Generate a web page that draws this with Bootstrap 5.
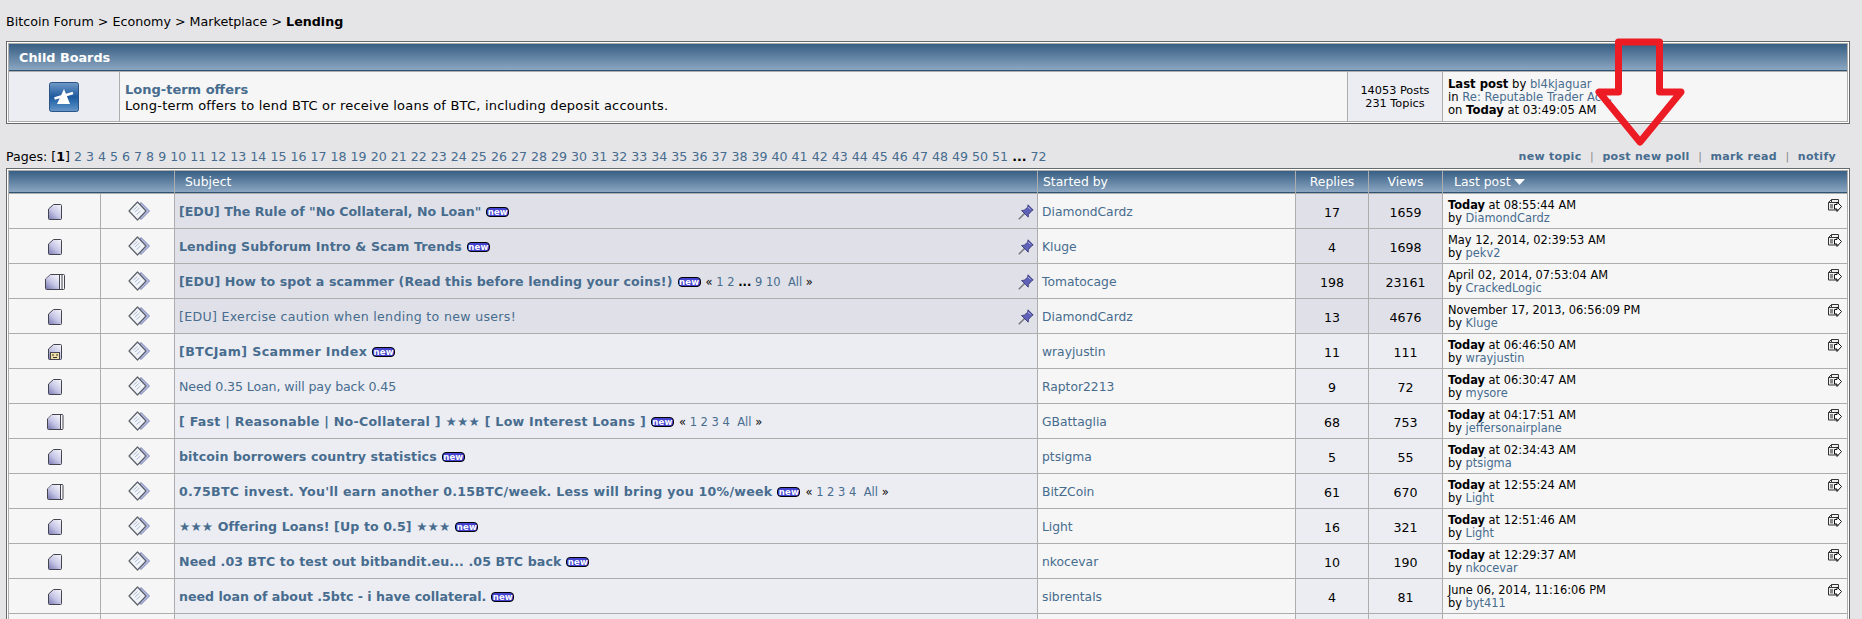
<!DOCTYPE html>
<html lang="en">
<head>
<meta charset="utf-8">
<title>Lending</title>
<link href="https://cdn.jsdelivr.net/npm/bootstrap@5.3.0/dist/css/bootstrap.min.css" rel="stylesheet">
<style>
html,body{height:619px;overflow:hidden}
body{background:#e5e5e8;color:#000;font-family:"DejaVu Sans",Verdana,sans-serif;font-size:11.4px;line-height:13px;position:relative}
a{color:#476c8e;text-decoration:none}
.forum-page{padding:0 12px 0 6px}
.crumbs{height:41px;padding-top:15px;font-size:12.7px;line-height:14px;color:#000}
.crumbs a{color:#000}
.frame{border:1px solid #696969;padding:1px;background:#fff}
.grid-table{width:100%;table-layout:fixed;border-collapse:separate;border-spacing:1px;background:#adadad}
.grid-table td,.grid-table th{padding:0;vertical-align:middle}
.bar{background:linear-gradient(#375e83,#8ba6c1);border-bottom:1px solid #2f5473;color:#fff;font-weight:400}
.bar-main th{height:22px;font-size:12.4px;line-height:14px}
.bar-main .head-subject{padding-left:10px}
.bar-main .head-author{padding-left:5px}
.bar-main .head-last{padding-left:11px}
.bar-child th{height:27px;font-size:12.8px;font-weight:700;padding-left:10px;padding-top:1px}
.c-w1{width:110px}.c-w3{width:94px}.c-w4{width:404px}
.m-w1{width:91px}.m-w2{width:73px}.m-w4{width:257px}.m-w5{width:72px}.m-w6{width:73px}.m-w7{width:404px}
.bg-a{background:#f6f6f6}.bg-b{background:#ecedf3}.bg-c{background:#e0e1e8}
.child-row td{height:49px}
.grid-table .board-cell{padding:0 0 0 5px}
.board-name{display:block;font-weight:700;font-size:13px;line-height:17px}
.board-text{font-size:13px;line-height:15px;letter-spacing:.2px}
.stat{font-size:11.3px;line-height:13px}
.grid-table .last-board{padding:1px 0 0 5px;font-size:11.6px}
.pager-row{height:44px;padding-top:26px;font-size:12.6px;line-height:14px}
.tools{padding-right:14px;color:#888;font-size:11px}
.tools a{font-weight:700;letter-spacing:.3px}
.sep{margin:0 8.6px}
.topic-row td{height:34px}
.subject-inner{padding:1px 3px 0 4px}
.topic-title{font-size:12.6px;font-weight:700}
.topic-title.plain{font-weight:400}
.fit-0{letter-spacing:-.12px}
.fit-1{letter-spacing:.1px}
.fit-2{letter-spacing:.26px}
.fit-3{letter-spacing:.4px}
.fit-4{letter-spacing:.3px}
.new-tag{display:inline-block;background:#4343cf;border:1px solid #000;border-radius:4px;color:#fff;font-size:8.5px;line-height:8px;height:10px;width:23px;text-align:center;font-weight:700;margin-left:5px;vertical-align:1px;letter-spacing:.2px}
.small-pages{font-size:11.5px;margin-left:5px}
.grid-table .author{padding:2px 0 0 4px;font-size:12.3px}
.grid-table .count{padding-top:2px;text-align:center;font-size:12.6px}
.grid-table .last-cell{padding:1px 0 0 5px;position:relative}
.jump{position:absolute;right:5px;top:5px;width:14px;height:14px}
.pin-icon{width:16px;height:16px;flex:none}
.topic-icon{display:block;margin:0 auto}
.msg-icon{display:block;margin:0 auto;position:relative;left:1px}
.arrow-mark{position:absolute;left:1590px;top:30px;width:100px;height:120px;pointer-events:none}
</style>
</head>
<body>
<svg width="0" height="0" class="position-absolute">
  <defs>
    <linearGradient id="pg" x1=".9" y1="0" x2=".1" y2="1"><stop offset="0" stop-color="#f4f4fb"/><stop offset=".55" stop-color="#c6c6e6"/><stop offset="1" stop-color="#7f7fb8"/></linearGradient>
    <symbol id="i-page" viewBox="0 0 20 20"><path d="M8.500 3.500h7a1 1 0 0 1 1 1v13a1 1 0 0 1-1 1h-11a1 1 0 0 1-1-1V8z" fill="url(#pg)" stroke="#44444e"/></symbol>
    <symbol id="i-pages" viewBox="0 0 20 20"><path d="M5.500 3.500h13a1 1 0 0 1 1 1v13a1 1 0 0 1-1 1H1.500a1 1 0 0 1-1-1V8z" fill="#f7f7fc" stroke="#44444e"/><path d="M5.500 4h8.500v14H1V8z" fill="url(#pg)"/><path d="M14.500 4v14M17 4v14" stroke="#44444e"/></symbol>
    <symbol id="i-pages2" viewBox="0 0 20 20"><path d="M7 3.500h10a1 1 0 0 1 1 1v13a1 1 0 0 1-1 1H3.500a1 1 0 0 1-1-1V8z" fill="#f7f7fc" stroke="#44444e"/><path d="M7 4h8v14H3V8z" fill="url(#pg)"/><path d="M15.500 4v14" stroke="#44444e"/></symbol>
    <symbol id="i-face" viewBox="0 0 20 20"><path d="M8.500 3.500h7a1 1 0 0 1 1 1v13a1 1 0 0 1-1 1h-11a1 1 0 0 1-1-1V8z" fill="url(#pg)" stroke="#44444e"/><rect x="5.500" y="11.500" width="9" height="7" fill="#f1dca6" stroke="#44444e"/><path d="M7 14h2M11 14h2M8 16.500h4" stroke="#333"/></symbol>
    <symbol id="i-msg" viewBox="0 0 22 20"><path d="M13 1.500l8.500 8.500-8.500 8.500-4-4z" fill="#b4bce6" stroke="#7d85b2"/><path d="M9.500 1l8.500 9-8.500 9L1 10z" fill="#f1f4f9" stroke="#5c6068" stroke-width="1.200" stroke-linejoin="round"/><path d="M5.500 9l4-3.500M7 11l4.500-4M8.500 13.500l4-3.500" stroke="#aebbd0"/></symbol>
    <symbol id="i-pin" viewBox="0 0 16 16"><path d="M.8 15.200l6-6" stroke="#77777f" stroke-width="1.500"/><path d="M10 .8l5.200 5.200-1.700 1-3 3.500-.3 2.700-6.700-6.700 2.700-.3 3.500-3z" fill="#5f61b8" stroke="#34346f" stroke-width=".8"/><path d="M10 3l2.500 2.500" stroke="#a9abe4"/></symbol>
    <symbol id="i-jump" viewBox="0 0 14 14"><path d="M3.500 .5h7v10.500H.5V3.500z" fill="#f0f0f0" stroke="#333"/><path d="M3.500 .5v3H.5M3.500 3.500h7" fill="none" stroke="#333"/><path d="M2 5h3v4.500H2z" fill="#8a8a8a"/><path d="M6.500 5.500h2.500V3l4.500 4.500-4.500 5v-2.500H6.500z" fill="#fff" stroke="#111"/></symbol>
  </defs>
</svg>

<div class="forum-page">
  <div class="crumbs"><a href="#">Bitcoin Forum</a> &gt; <a href="#">Economy</a> &gt; <a href="#">Marketplace</a> &gt; <b>Lending</b></div>

  <div class="frame">
    <table class="grid-table">
      <colgroup><col class="c-w1"><col><col class="c-w3"><col class="c-w4"></colgroup>
      <tr class="bar-child"><th colspan="4" class="bar">Child Boards</th></tr>
      <tr class="child-row">
        <td class="bg-b text-center">
          <svg width="30" height="30" viewBox="0 0 30 30" class="d-block mx-auto">
            <defs><linearGradient id="bd" x1="0" y1="0" x2="0" y2="1"><stop offset="0" stop-color="#7199c8"/><stop offset=".5" stop-color="#1d5a9e"/><stop offset=".75" stop-color="#3c79b6"/><stop offset="1" stop-color="#6a97c9"/></linearGradient></defs>
            <rect x=".5" y=".5" width="29" height="29" rx="2" fill="url(#bd)" stroke="#2a5586"/>
            <path d="M5.500 16.500L24 11" stroke="#fff" stroke-width="2.500"/>
            <path d="M15 7l6 15H8z" fill="#fff"/>
          </svg>
        </td>
        <td class="bg-a board-cell"><a href="#" class="board-name">Long-term offers</a><div class="board-text">Long-term offers to lend BTC or receive loans of BTC, including deposit accounts.</div></td>
        <td class="bg-b text-center stat">14053 Posts<br>231 Topics</td>
        <td class="bg-a last-board"><b>Last post</b> by <a href="#">bl4kjaguar</a><br>in <a href="#">Re: Reputable Trader Ac...</a><br>on <b>Today</b> at 03:49:05 AM</td>
      </tr>
    </table>
  </div>

  <div class="pager-row d-flex justify-content-between">
    <div>Pages: [<b>1</b>] <a href="#">2</a> <a href="#">3</a> <a href="#">4</a> <a href="#">5</a> <a href="#">6</a> <a href="#">7</a> <a href="#">8</a> <a href="#">9</a> <a href="#">10</a> <a href="#">11</a> <a href="#">12</a> <a href="#">13</a> <a href="#">14</a> <a href="#">15</a> <a href="#">16</a> <a href="#">17</a> <a href="#">18</a> <a href="#">19</a> <a href="#">20</a> <a href="#">21</a> <a href="#">22</a> <a href="#">23</a> <a href="#">24</a> <a href="#">25</a> <a href="#">26</a> <a href="#">27</a> <a href="#">28</a> <a href="#">29</a> <a href="#">30</a> <a href="#">31</a> <a href="#">32</a> <a href="#">33</a> <a href="#">34</a> <a href="#">35</a> <a href="#">36</a> <a href="#">37</a> <a href="#">38</a> <a href="#">39</a> <a href="#">40</a> <a href="#">41</a> <a href="#">42</a> <a href="#">43</a> <a href="#">44</a> <a href="#">45</a> <a href="#">46</a> <a href="#">47</a> <a href="#">48</a> <a href="#">49</a> <a href="#">50</a> <a href="#">51</a> <b>...</b> <a href="#">72</a></div>
    <div class="tools"><a href="#">new topic</a><span class="sep">|</span><a href="#">post new poll</a><span class="sep">|</span><a href="#">mark read</a><span class="sep">|</span><a href="#">notify</a></div>
  </div>

  <div class="frame">
    <table class="grid-table">
      <colgroup><col class="m-w1"><col class="m-w2"><col><col class="m-w4"><col class="m-w5"><col class="m-w6"><col class="m-w7"></colgroup>
      <tr class="bar-main">
        <th colspan="2" class="bar"></th>
        <th class="bar head-subject">Subject</th>
        <th class="bar head-author">Started by</th>
        <th class="bar text-center">Replies</th>
        <th class="bar text-center">Views</th>
        <th class="bar head-last">Last post <svg width="11" height="6" viewBox="0 0 11 6"><path d="M0 0h11L5.500 6z" fill="#fff"/></svg></th>
      </tr>

      <tr class="topic-row">
        <td class="bg-a"><svg class="topic-icon" width="20" height="20"><use href="#i-page"/></svg></td>
        <td class="bg-a"><svg class="msg-icon" width="22" height="20"><use href="#i-msg"/></svg></td>
        <td class="bg-c"><div class="subject-inner d-flex justify-content-between align-items-center"><span><a href="#" class="topic-title">[EDU] The Rule of "No Collateral, No Loan"</a><span class="new-tag">new</span></span><svg class="pin-icon"><use href="#i-pin"/></svg></div></td>
        <td class="bg-a author"><a href="#">DiamondCardz</a></td>
        <td class="bg-c count">17</td><td class="bg-c count">1659</td>
        <td class="bg-a last-cell"><b>Today</b> at 08:55:44 AM<br>by <a href="#">DiamondCardz</a><svg class="jump"><use href="#i-jump"/></svg></td>
      </tr>
      <tr class="topic-row">
        <td class="bg-a"><svg class="topic-icon" width="20" height="20"><use href="#i-page"/></svg></td>
        <td class="bg-a"><svg class="msg-icon" width="22" height="20"><use href="#i-msg"/></svg></td>
        <td class="bg-c"><div class="subject-inner d-flex justify-content-between align-items-center"><span><a href="#" class="topic-title fit-1">Lending Subforum Intro &amp; Scam Trends</a><span class="new-tag">new</span></span><svg class="pin-icon"><use href="#i-pin"/></svg></div></td>
        <td class="bg-a author"><a href="#">Kluge</a></td>
        <td class="bg-c count">4</td><td class="bg-c count">1698</td>
        <td class="bg-a last-cell">May 12, 2014, 02:39:53 AM<br>by <a href="#">pekv2</a><svg class="jump"><use href="#i-jump"/></svg></td>
      </tr>
      <tr class="topic-row">
        <td class="bg-a"><svg class="topic-icon" width="20" height="20"><use href="#i-pages"/></svg></td>
        <td class="bg-a"><svg class="msg-icon" width="22" height="20"><use href="#i-msg"/></svg></td>
        <td class="bg-c"><div class="subject-inner d-flex justify-content-between align-items-center"><span><a href="#" class="topic-title fit-1">[EDU] How to spot a scammer (Read this before lending your coins!)</a><span class="new-tag">new</span><span class="small-pages">« <a href="#">1</a> <a href="#">2</a> <b>...</b> <a href="#">9</a> <a href="#">10</a> &nbsp;<a href="#">All</a> »</span></span><svg class="pin-icon"><use href="#i-pin"/></svg></div></td>
        <td class="bg-a author"><a href="#">Tomatocage</a></td>
        <td class="bg-c count">198</td><td class="bg-c count">23161</td>
        <td class="bg-a last-cell">April 02, 2014, 07:53:04 AM<br>by <a href="#">CrackedLogic</a><svg class="jump"><use href="#i-jump"/></svg></td>
      </tr>
      <tr class="topic-row">
        <td class="bg-a"><svg class="topic-icon" width="20" height="20"><use href="#i-page"/></svg></td>
        <td class="bg-a"><svg class="msg-icon" width="22" height="20"><use href="#i-msg"/></svg></td>
        <td class="bg-c"><div class="subject-inner d-flex justify-content-between align-items-center"><span><a href="#" class="topic-title plain fit-4">[EDU] Exercise caution when lending to new users!</a></span><svg class="pin-icon"><use href="#i-pin"/></svg></div></td>
        <td class="bg-a author"><a href="#">DiamondCardz</a></td>
        <td class="bg-c count">13</td><td class="bg-c count">4676</td>
        <td class="bg-a last-cell">November 17, 2013, 06:56:09 PM<br>by <a href="#">Kluge</a><svg class="jump"><use href="#i-jump"/></svg></td>
      </tr>
      <tr class="topic-row">
        <td class="bg-a"><svg class="topic-icon" width="20" height="20"><use href="#i-face"/></svg></td>
        <td class="bg-a"><svg class="msg-icon" width="22" height="20"><use href="#i-msg"/></svg></td>
        <td class="bg-b"><div class="subject-inner"><a href="#" class="topic-title fit-3">[BTCJam] Scammer Index</a><span class="new-tag">new</span></div></td>
        <td class="bg-a author"><a href="#">wrayjustin</a></td>
        <td class="bg-b count">11</td><td class="bg-b count">111</td>
        <td class="bg-a last-cell"><b>Today</b> at 06:46:50 AM<br>by <a href="#">wrayjustin</a><svg class="jump"><use href="#i-jump"/></svg></td>
      </tr>
      <tr class="topic-row">
        <td class="bg-a"><svg class="topic-icon" width="20" height="20"><use href="#i-page"/></svg></td>
        <td class="bg-a"><svg class="msg-icon" width="22" height="20"><use href="#i-msg"/></svg></td>
        <td class="bg-b"><div class="subject-inner"><a href="#" class="topic-title plain fit-0">Need 0.35 Loan, will pay back 0.45</a></div></td>
        <td class="bg-a author"><a href="#">Raptor2213</a></td>
        <td class="bg-b count">9</td><td class="bg-b count">72</td>
        <td class="bg-a last-cell"><b>Today</b> at 06:30:47 AM<br>by <a href="#">mysore</a><svg class="jump"><use href="#i-jump"/></svg></td>
      </tr>
      <tr class="topic-row">
        <td class="bg-a"><svg class="topic-icon" width="20" height="20"><use href="#i-pages2"/></svg></td>
        <td class="bg-a"><svg class="msg-icon" width="22" height="20"><use href="#i-msg"/></svg></td>
        <td class="bg-b"><div class="subject-inner"><a href="#" class="topic-title fit-2">[ Fast | Reasonable | No-Collateral ] ★★★ [ Low Interest Loans ]</a><span class="new-tag">new</span><span class="small-pages">« <a href="#">1</a> <a href="#">2</a> <a href="#">3</a> <a href="#">4</a> &nbsp;<a href="#">All</a> »</span></div></td>
        <td class="bg-a author"><a href="#">GBattaglia</a></td>
        <td class="bg-b count">68</td><td class="bg-b count">753</td>
        <td class="bg-a last-cell"><b>Today</b> at 04:17:51 AM<br>by <a href="#">jeffersonairplane</a><svg class="jump"><use href="#i-jump"/></svg></td>
      </tr>
      <tr class="topic-row">
        <td class="bg-a"><svg class="topic-icon" width="20" height="20"><use href="#i-page"/></svg></td>
        <td class="bg-a"><svg class="msg-icon" width="22" height="20"><use href="#i-msg"/></svg></td>
        <td class="bg-b"><div class="subject-inner"><a href="#" class="topic-title fit-1">bitcoin borrowers country statistics</a><span class="new-tag">new</span></div></td>
        <td class="bg-a author"><a href="#">ptsigma</a></td>
        <td class="bg-b count">5</td><td class="bg-b count">55</td>
        <td class="bg-a last-cell"><b>Today</b> at 02:34:43 AM<br>by <a href="#">ptsigma</a><svg class="jump"><use href="#i-jump"/></svg></td>
      </tr>
      <tr class="topic-row">
        <td class="bg-a"><svg class="topic-icon" width="20" height="20"><use href="#i-pages2"/></svg></td>
        <td class="bg-a"><svg class="msg-icon" width="22" height="20"><use href="#i-msg"/></svg></td>
        <td class="bg-b"><div class="subject-inner"><a href="#" class="topic-title fit-2">0.75BTC invest. You'll earn another 0.15BTC/week. Less will bring you 10%/week</a><span class="new-tag">new</span><span class="small-pages">« <a href="#">1</a> <a href="#">2</a> <a href="#">3</a> <a href="#">4</a> &nbsp;<a href="#">All</a> »</span></div></td>
        <td class="bg-a author"><a href="#">BitZCoin</a></td>
        <td class="bg-b count">61</td><td class="bg-b count">670</td>
        <td class="bg-a last-cell"><b>Today</b> at 12:55:24 AM<br>by <a href="#">Light</a><svg class="jump"><use href="#i-jump"/></svg></td>
      </tr>
      <tr class="topic-row">
        <td class="bg-a"><svg class="topic-icon" width="20" height="20"><use href="#i-page"/></svg></td>
        <td class="bg-a"><svg class="msg-icon" width="22" height="20"><use href="#i-msg"/></svg></td>
        <td class="bg-b"><div class="subject-inner"><a href="#" class="topic-title fit-1">★★★ Offering Loans! [Up to 0.5] ★★★</a><span class="new-tag">new</span></div></td>
        <td class="bg-a author"><a href="#">Light</a></td>
        <td class="bg-b count">16</td><td class="bg-b count">321</td>
        <td class="bg-a last-cell"><b>Today</b> at 12:51:46 AM<br>by <a href="#">Light</a><svg class="jump"><use href="#i-jump"/></svg></td>
      </tr>
      <tr class="topic-row">
        <td class="bg-a"><svg class="topic-icon" width="20" height="20"><use href="#i-page"/></svg></td>
        <td class="bg-a"><svg class="msg-icon" width="22" height="20"><use href="#i-msg"/></svg></td>
        <td class="bg-b"><div class="subject-inner"><a href="#" class="topic-title fit-1">Need .03 BTC to test out bitbandit.eu... .05 BTC back</a><span class="new-tag">new</span></div></td>
        <td class="bg-a author"><a href="#">nkocevar</a></td>
        <td class="bg-b count">10</td><td class="bg-b count">190</td>
        <td class="bg-a last-cell"><b>Today</b> at 12:29:37 AM<br>by <a href="#">nkocevar</a><svg class="jump"><use href="#i-jump"/></svg></td>
      </tr>
      <tr class="topic-row">
        <td class="bg-a"><svg class="topic-icon" width="20" height="20"><use href="#i-page"/></svg></td>
        <td class="bg-a"><svg class="msg-icon" width="22" height="20"><use href="#i-msg"/></svg></td>
        <td class="bg-b"><div class="subject-inner"><a href="#" class="topic-title">need loan of about .5btc - i have collateral.</a><span class="new-tag">new</span></div></td>
        <td class="bg-a author"><a href="#">sibrentals</a></td>
        <td class="bg-b count">4</td><td class="bg-b count">81</td>
        <td class="bg-a last-cell">June 06, 2014, 11:16:06 PM<br>by <a href="#">byt411</a><svg class="jump"><use href="#i-jump"/></svg></td>
      </tr>
      <tr class="topic-row">
        <td class="bg-a"></td><td class="bg-a"></td><td class="bg-b"></td><td class="bg-a"></td><td class="bg-b"></td><td class="bg-b"></td><td class="bg-a"></td>
      </tr>
    </table>
  </div>
</div>

<svg class="arrow-mark" viewBox="0 0 100 120" aria-hidden="true"><path d="M28.500 12H69.500V62H91L50 112 9 62H28.500z" fill="none" stroke="#ed1c24" stroke-width="7" stroke-linejoin="round"/></svg>
</body>
</html>
